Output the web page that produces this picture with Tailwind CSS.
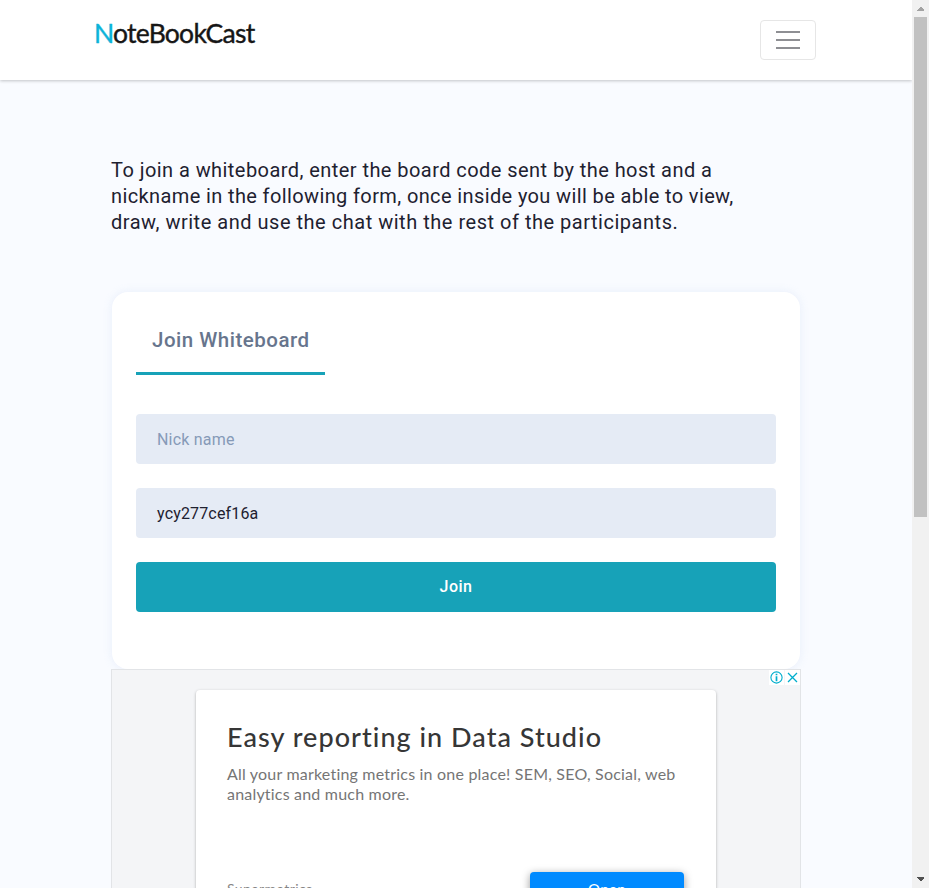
<!DOCTYPE html>
<html lang="en">
<head>
<meta charset="utf-8">
<title>NoteBookCast</title>
<script src="https://cdn.jsdelivr.net/npm/@tailwindcss/browser@4"></script>
</head>
<body class="flex h-[888px] w-[929px] overflow-hidden bg-[#f9fbff] font-['Roboto',sans-serif] text-[#212529]">
  <div class="flex h-[888px] w-[912px] flex-col overflow-hidden">
    <header class="relative flex h-20 w-full shrink-0 items-start justify-between bg-white pr-24 pl-[94px] shadow-[0_1px_3px_rgba(0,0,0,0.22)]">
      <a class="mt-[17px] font-['Lato',sans-serif] text-[26.5px] leading-[32px] font-normal tracking-[-0.75px] whitespace-nowrap text-[#161616] [-webkit-text-stroke:0.4px_currentColor]"><span class="text-[#0cb3d9]">N</span>oteBookCast</a>
      <button class="mt-5 flex h-10 w-14 flex-col items-center justify-center gap-1.5 rounded border border-[#e6e6e6]" aria-label="Menu">
        <span class="h-0.5 w-6 bg-[#8e8f93]"></span>
        <span class="h-0.5 w-6 bg-[#8e8f93]"></span>
        <span class="h-0.5 w-6 bg-[#8e8f93]"></span>
      </button>
    </header>
    <main class="mx-auto flex w-[690px] flex-col pt-[77px]">
      <p class="h-[134px] text-[20px] leading-[26px] whitespace-nowrap text-[#1e2130]">
        <span class="block tracking-[0.44px]">To join a whiteboard, enter the board code sent by the host and a</span>
        <span class="block tracking-[0.38px]">nickname in the following form, once inside you will be able to view,</span>
        <span class="block tracking-[0.52px]">draw, write and use the chat with the rest of the participants.</span>
      </p>
      <section class="mx-px mt-px flex h-[377px] w-[688px] flex-col rounded-2xl bg-white px-6 pt-[23px] shadow-[0_0_8px_rgba(210,225,245,0.45)]">
        <h2 class="flex h-[60px] w-[189px] border-b-[3px] border-[#17a2b8] pt-[10px] pl-4 text-[20.5px] leading-[30px] font-medium tracking-[0.5px] whitespace-nowrap text-[#67758d]">Join Whiteboard</h2>
        <div class="mt-[39px] flex flex-col gap-6 text-[16px] leading-[50px]">
          <div class="h-[50px] rounded bg-[#e5ebf5] pt-px pl-[21px] tracking-[0.2px] text-[#869ab8]">Nick name</div>
          <div class="h-[50px] rounded bg-[#e5ebf5] pt-px pl-[21px] tracking-[0.16px] text-[#1e2130]">ycy277cef16a</div>
          <button class="h-[50px] rounded bg-[#17a2b8] text-center font-medium tracking-[0.5px] text-white">Join</button>
        </div>
      </section>
      <section class="relative flex h-[280px] w-[690px] justify-center overflow-hidden border border-[#e2e4e7] bg-[#f4f5f7] pt-5 font-['Lato',sans-serif]">
        <div class="absolute top-0 right-0 flex gap-px">
          <span class="flex h-[15px] w-[15px] items-center justify-center bg-white">
            <svg width="13" height="13" viewBox="0 0 13 13" fill="none" stroke="#00aecd"><circle cx="6.5" cy="6.5" r="5.6" stroke-width="1.1"/><path d="M6.5 5.3v5M6.5 2.8v1.5" stroke-width="1.7"/></svg>
          </span>
          <span class="flex h-[15px] w-[15px] items-center justify-center bg-white">
            <svg width="11" height="11" viewBox="0 0 11 11" fill="none" stroke="#00aecd" stroke-width="1.3"><path d="M1 1l9 9M10 1l-9 9"/></svg>
          </span>
        </div>
        <article class="h-[300px] w-[520px] rounded bg-white px-[31px] pt-[29px] whitespace-nowrap shadow-[0_1px_3px_rgba(0,0,0,0.3)]">
          <h3 class="text-[27px] leading-[36px] font-medium tracking-[1.03px] text-[#363636]">Easy reporting in Data Studio</h3>
          <p class="mt-[9px] h-[108px] text-[16px] leading-[20px] tracking-[0.2px] text-[#757575]">All your marketing metrics in one place! SEM, SEO, Social, web<br>analytics and much more.</p>
          <div class="flex justify-between pr-px">
            <span class="mt-[7px] text-[14px] leading-[20px] tracking-[0.4px] text-[#858585]">Supermetrics</span>
            <span class="flex h-9 w-[154px] justify-center rounded bg-[#008aff] pt-[7px] text-[15px] leading-[20px] tracking-[0.3px] text-white shadow-[0_2px_8px_rgba(0,0,0,0.4)]">Open</span>
          </div>
        </article>
      </section>
    </main>
  </div>
  <aside class="flex h-[888px] w-[17px] flex-col items-center justify-between bg-[#f1f1f1]">
    <div class="flex flex-col items-center">
      <svg width="17" height="17" viewBox="0 0 17 17" fill="#a3a3a3" shape-rendering="crispEdges"><path d="M5 11v-1l3.5-3.5L12 10v1z"/></svg>
      <div class="h-[500px] w-[13px] bg-[#c1c1c1]"></div>
    </div>
    <svg width="17" height="17" viewBox="0 0 17 17" fill="#505050" shape-rendering="crispEdges"><path d="M5 6v1l3.5 3.5L12 7V6z"/></svg>
  </aside>
</body>
</html>
